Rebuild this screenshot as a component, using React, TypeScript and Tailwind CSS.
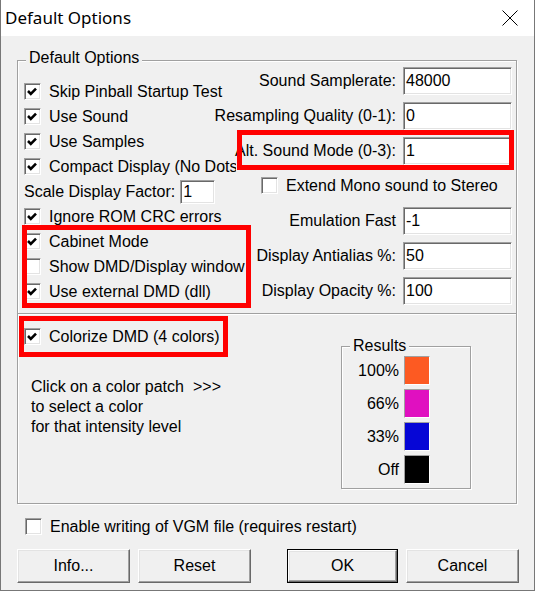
import React from 'react';

function Box({ on }: { on?: boolean }) {
  return (
    <span className="flex h-[17px] w-[17px] shrink-0 items-center justify-center border border-t-[#a0a0a0] border-l-[#a0a0a0] border-b-white border-r-white bg-white shadow-[inset_1px_1px_0_#696969,inset_-1px_-1px_0_#e3e3e3]">
      {on && (
        <svg width="10" height="9" viewBox="0 0 10 9" className="-ml-[1px]">
          <path d="M1 4 L3.8 6.8 L9 1.6" fill="none" stroke="#000" strokeWidth="2.6" />
        </svg>
      )}
    </span>
  );
}

function Check({ label, on, clip }: { label: string; on?: boolean; clip?: boolean }) {
  return (
    <div
      className={`flex h-[25px] items-center gap-[8px] whitespace-nowrap ${clip ? 'w-[212px] overflow-hidden' : ''}`}
    >
      <Box on={on} />
      <span>{label}</span>
    </div>
  );
}

function Input({ value, w }: { value: string; w: string }) {
  return (
    <span
      className={`flex shrink-0 items-center border border-t-[#a0a0a0] border-l-[#a0a0a0] border-b-white border-r-white bg-white pl-[2px] shadow-[inset_1px_1px_0_#696969,inset_-1px_-1px_0_#e3e3e3] ${w}`}
    >
      {value}
    </span>
  );
}

function Field({ label, value }: { label: string; value: string }) {
  return (
    <div className="flex h-[35px] items-center justify-end gap-[7px] whitespace-nowrap">
      <span className="shrink-0">{label}</span>
      <Input value={value} w="h-[28px] w-[109px]" />
    </div>
  );
}

function Button({ label, primary, w }: { label: string; primary?: boolean; w: string }) {
  return (
    <div className={`h-[34px] ${w} ${primary ? 'border border-black' : ''}`}>
      <div className="flex h-full w-full items-center justify-center border border-t-white border-l-white border-b-[#696969] border-r-[#696969] bg-[#f0f0f0] shadow-[inset_-1px_-1px_0_#a0a0a0,inset_1px_1px_0_#e3e3e3]">
        {label}
      </div>
    </div>
  );
}

const patches = [
  { label: '100%', color: 'bg-[#fd5a22]' },
  { label: '66%', color: 'bg-[#e010c0]' },
  { label: '33%', color: 'bg-[#0606d6]' },
  { label: 'Off', color: 'bg-black' },
];

export default function App() {
  return (
    <div className="relative flex h-[591px] w-[535px] flex-col overflow-hidden border-x border-b border-[#777] bg-[#f0f0f0] font-['Liberation_Sans',Arial,sans-serif] text-[16px] leading-[18px] text-black">
      <div className="flex h-[36px] shrink-0 items-center justify-between bg-white pl-[4px] pr-[16px]">
        <span className="font-['Noto_Sans',sans-serif] text-[17px]">Default Options</span>
        <svg width="16" height="16" viewBox="0 0 16 16">
          <path d="M0.5 0.5 L15.5 15.5 M15.5 0.5 L0.5 15.5" stroke="#000" strokeWidth="1" />
        </svg>
      </div>

      <div className="flex flex-1 flex-col pl-[16px] pt-[24px]">
        <div className="relative flex h-[444px] w-[500px] flex-col border border-[#a0a0a0] shadow-[inset_1px_1px_0_#fff,1px_1px_0_#fff]">
          <span className="absolute -top-[12px] left-[8px] bg-[#f0f0f0] px-[3px]">Default Options</span>

          <div className="flex h-[252px]">
            <div className="w-[218px] shrink-0 pl-[6px] pt-[18px]">
              <Check label="Skip Pinball Startup Test" on />
              <Check label="Use Sound" on />
              <Check label="Use Samples" on />
              <Check label="Compact Display (No Dots)" on clip />
              <div className="flex h-[25px] items-center gap-[5px] whitespace-nowrap">
                <span>Scale Display Factor:</span>
                <Input value="1" w="h-[24px] w-[35px]" />
              </div>
              <Check label="Ignore ROM CRC errors" on />
              <Check label="Cabinet Mode" on />
              <Check label="Show DMD/Display window" />
              <Check label="Use external DMD (dll)" on />
            </div>
            <div className="min-w-0 flex-1 pr-[4px] pt-[2px]">
              <Field label="Sound Samplerate:" value="48000" />
              <Field label="Resampling Quality (0-1):" value="0" />
              <Field label="Alt. Sound Mode (0-3):" value="1" />
              <div className="flex h-[35px] items-center pl-[25px]">
                <Check label="Extend Mono sound to Stereo" />
              </div>
              <Field label="Emulation Fast" value="-1" />
              <Field label="Display Antialias %:" value="50" />
              <Field label="Display Opacity %:" value="100" />
            </div>
          </div>

          <div className="h-[2px] border-t border-[#a0a0a0] bg-white" />

          <div className="flex flex-1">
            <div className="w-[323px] shrink-0 pl-[6px] pt-[9px]">
              <Check label="Colorize DMD (4 colors)" on />
              <div className="mt-[28px] pl-[7px] leading-[20px]">
                <div className="whitespace-nowrap">
                  <span className="inline-block w-[162px]">Click on a color patch</span>
                  <span>&gt;&gt;&gt;</span>
                </div>
                <div>to select a color</div>
                <div>for that intensity level</div>
              </div>
            </div>
            <div className="relative mt-[31px] h-[143px] w-[130px] border border-[#a0a0a0] shadow-[inset_1px_1px_0_#fff,1px_1px_0_#fff]">
              <span className="absolute -top-[10px] left-[8px] bg-[#f0f0f0] px-[3px]">Results</span>
              <div className="flex flex-col gap-[4px] pt-[9px]">
                {patches.map((p) => (
                  <div key={p.label} className="flex h-[29px] items-center">
                    <span className="mr-[5px] w-[57px] text-right">{p.label}</span>
                    <span className={`h-[29px] w-[26px] border border-t-[#a0a0a0] border-l-[#a0a0a0] border-b-white border-r-white ${p.color}`} />
                  </div>
                ))}
              </div>
            </div>
          </div>
        </div>

        <div className="mt-[10px] pl-[8px]">
          <Check label="Enable writing of VGM file (requires restart)" />
        </div>

        <div className="mt-[10px] flex gap-[8px]">
          <Button label="Info..." w="w-[113px]" />
          <Button label="Reset" w="w-[113px]" />
          <div className="w-[20px]" />
          <Button label="OK" primary w="w-[111px]" />
          <Button label="Cancel" w="w-[113px]" />
        </div>
      </div>

      <div className="absolute left-[236px] top-[130px] h-[40px] w-[277px] border-[5px] border-[#ff0000]" />
      <div className="absolute left-[21px] top-[225px] h-[83px] w-[229px] border-[5px] border-[#ff0000]" />
      <div className="absolute left-[18px] top-[316px] h-[41px] w-[209px] border-[5px] border-[#ff0000]" />
    </div>
  );
}
